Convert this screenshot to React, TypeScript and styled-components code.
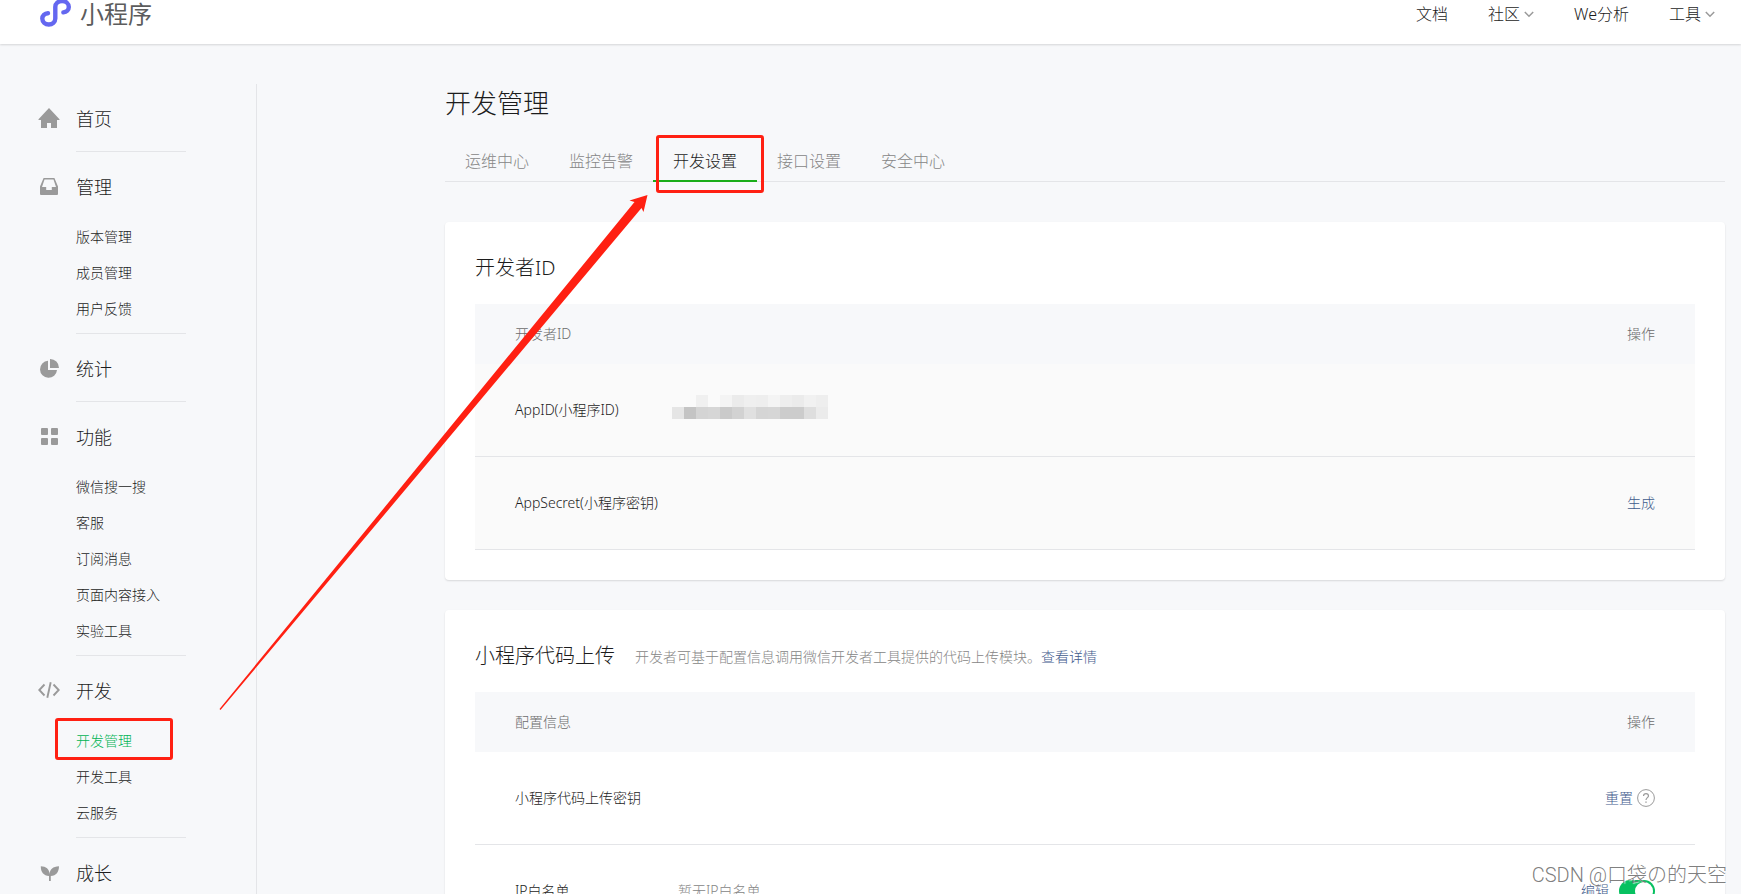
import React from "react";
import styled, { createGlobalStyle, css } from "styled-components";

const color = {
  text: "#1c1c1c",
  muted: "#868686",
  head: "#6c6c6c",
  line: "#e4e5e8",
  page: "#f7f8fa",
  green: "#00b454",
  switchGreen: "#07c160",
  tabGreen: "#1aad19",
  link: "#415a8c",
  mark: "#ff2012",
};

const GlobalStyle = createGlobalStyle`
  *, *::before, *::after { box-sizing: border-box; }
  body {
    margin: 0;
    background: ${color.page};
    color: ${color.text};
    font-family: "Noto Sans", "Noto Sans CJK SC", sans-serif;
    font-weight: 300;
    font-size: 14px;
  }
  a { color: inherit; text-decoration: none; }
  h1, h2, ul { margin: 0; padding: 0; font-weight: inherit; }
  ul { list-style: none; }
  button { font: inherit; border: 0; padding: 0; background: none; cursor: pointer; }
`;

const Shell = styled.div`
  position: relative;
  display: flex;
  flex-direction: column;
  height: 100vh;
  overflow: hidden;
`;

const Header = styled.header`
  display: flex;
  flex: none;
  align-items: center;
  justify-content: space-between;
  height: 44px;
  padding: 0 26px 16px 40px;
  background: #fff;
  box-shadow: 0 1px 2px rgba(0, 0, 0, 0.14);
`;

const Brand = styled.a`
  display: flex;
  align-items: center;
  gap: 8px;
  color: #5c5c5c;
  font-size: 24px;
  line-height: 28px;
  font-weight: 400;
  svg {
    margin-top: -2px;
  }
`;

const TopNav = styled.nav`
  display: flex;
  gap: 40px;
`;

const TopLink = styled.a`
  display: flex;
  align-items: center;
  gap: 4px;
  font-size: 16px;
  line-height: 24px;
`;

const Body = styled.div`
  display: flex;
  flex: none;
  align-items: stretch;
  padding: 40px 16px 0 0;
`;

const Sidebar = styled.nav`
  flex: none;
  width: 257px;
  padding-left: 38px;
  border-right: 1px solid ${color.line};
`;

const Group = styled.section`
  display: grid;
  grid-template-columns: 22px 110px;
  column-gap: 16px;
`;

const GroupIcon = styled.svg`
  width: 22px;
  height: 22px;
  margin-top: 24px;
  fill: #9a9a9a;
`;

const GroupBody = styled.div`
  padding-top: 19px;
  border-bottom: 1px solid ${color.line};
`;

const GroupTitle = styled.a`
  display: block;
  margin-bottom: 16px;
  font-size: 18px;
  line-height: 32px;
`;

const SubList = styled.ul`
  padding-bottom: 6px;
`;

const SubItem = styled.li`
  position: relative;
  line-height: 36px;
  white-space: nowrap;
`;

const SubLink = styled.a<{ $active?: boolean }>`
  color: ${(p) => (p.$active ? color.green : color.text)};
`;

const marker = css`
  position: absolute;
  border: 3px solid ${color.mark};
  border-radius: 3px;
  pointer-events: none;
`;

const MenuMarker = styled.span`
  ${marker}
  top: -5px;
  left: -21px;
  width: 118px;
  height: 42px;
`;

const TabMarker = styled.span`
  ${marker}
  top: -7px;
  left: 3px;
  width: 108px;
  height: 58px;
`;

const Main = styled.main`
  flex: 1;
  min-width: 0;
  margin-left: 188px;
`;

const PageTitle = styled.h1`
  font-size: 26px;
  line-height: 38px;
  margin-bottom: 20px;
`;

const Tabs = styled.div`
  display: flex;
  margin-bottom: 40px;
  box-shadow: inset 0 -1px ${color.line};
`;

const TabSlot = styled.div`
  position: relative;
`;

const Tab = styled.button<{ $active?: boolean }>`
  display: block;
  height: 40px;
  padding: 0 20px;
  border-bottom: 2px solid ${(p) => (p.$active ? color.tabGreen : "transparent")};
  color: ${(p) => (p.$active ? color.text : color.muted)};
  font-size: 16px;
  line-height: 38px;
`;

const Card = styled.section`
  margin-bottom: 30px;
  padding: 30px;
  background: #fff;
  border-radius: 4px;
  box-shadow: 0 1px 2px rgba(0, 0, 0, 0.13);
`;

const CardHead = styled.div`
  display: flex;
  align-items: center;
  gap: 20px;
  margin-bottom: 20px;
  line-height: 32px;
`;

const CardTitle = styled.h2`
  font-size: 20px;
`;

const Hint = styled.p`
  margin: 0;
  padding-top: 2px;
  line-height: 30px;
  color: ${color.muted};
`;

const TextLink = styled.a`
  color: ${color.link};
`;

const DataTable = styled.table<{ $tinted?: boolean }>`
  width: 100%;
  border-spacing: 0;
  line-height: 20px;
  th {
    height: 60px;
    padding: 0;
    background: ${color.page};
    color: ${color.head};
    font-weight: inherit;
    text-align: left;
  }
  td {
    height: 93px;
    padding: 0;
    border-bottom: 1px solid ${color.line};
    background: ${(p) => (p.$tinted ? "#fafafa" : "#fff")};
  }
  th:first-child,
  td:first-child {
    padding-left: 40px;
  }
  th:last-child,
  td:last-child {
    padding-right: 40px;
    text-align: right;
  }
`;

const LabelCol = styled.col<{ $width: number }>`
  width: ${(p) => p.$width}px;
`;

const Muted = styled.span`
  color: ${color.muted};
`;

const Actions = styled.div<{ $gap: number }>`
  display: flex;
  align-items: center;
  justify-content: flex-end;
  gap: ${(p) => p.$gap}px;
`;

const HelpButton = styled.button`
  display: block;
  width: 18px;
  height: 18px;
  svg {
    display: block;
  }
`;

const Switch = styled.input`
  appearance: none;
  display: block;
  width: 36px;
  height: 22px;
  margin: 0;
  padding: 2px;
  border-radius: 11px;
  background: ${color.switchGreen};
  &::before {
    content: "";
    display: block;
    width: 18px;
    height: 18px;
    margin-left: auto;
    border-radius: 50%;
    background: #fff;
  }
`;

const Mosaic = styled.svg`
  display: block;
`;

const ArrowLayer = styled.svg`
  position: absolute;
  inset: 0;
  width: 100%;
  height: 100%;
  pointer-events: none;
  fill: ${color.mark};
`;

const Watermark = styled.div`
  position: absolute;
  right: 14px;
  bottom: 5px;
  color: rgba(110, 110, 110, 0.9);
  font-family: Roboto, "Noto Sans CJK SC", sans-serif;
  font-size: 20px;
  line-height: 28px;
  text-shadow: 1px 1px 1px rgba(255, 255, 255, 0.8);
  pointer-events: none;
`;

const Chevron = () => (
  <svg width="10" height="8" viewBox="0 0 10 8" fill="none" stroke="#9a9a9a" strokeWidth="1.5" aria-hidden="true">
    <path d="M.8 2 5 6.2 9.2 2" />
  </svg>
);

const icons = {
  home: <path d="M11 0 21.5 11.2V12H19v8h-6v-5H9v5H3v-8H.5v-.8z" />,
  inbox: (
    <path
      fillRule="evenodd"
      d="M5.6 2h10.8L20 10.5V18a1 1 0 0 1-1 1H3a1 1 0 0 1-1-1v-7.500zM6.500 3.500 4 11h4.200v3h5.600v-3H18l-2.500-7.500z"
    />
  ),
  pie: <path d="M10 2.800V12h9a8.500 8.500 0 1 1-9-9.200zM12 1a8.800 8.800 0 0 1 9 8.900h-9z" />,
  grid: (
    <>
      <rect x="3" y="2" width="7" height="7" rx="1" />
      <rect x="13" y="2" width="7" height="7" rx="1" />
      <rect x="3" y="12" width="7" height="7" rx="1" />
      <rect x="13" y="12" width="7" height="7" rx="1" />
    </>
  ),
  code: (
    <path d="M6.500 4.500 1.300 10l5.200 5.500M15.500 4.500l5.200 5.500-5.200 5.500M12.700 2.200 9.300 17.800" fill="none" stroke="#9a9a9a" strokeWidth="1.900" />
  ),
  sprout: (
    <path d="M2.800 4.200c5.200.2 8.600 2.800 8.800 7.800.4-4.800 3.200-7.600 9.400-7.800 0 5.600-2.800 9.600-8.200 9.800V19h-1.800v-5C5.800 13.600 2.600 10 2.800 4.200z" />
  ),
};

type Item = { icon: keyof typeof icons; title: string; subs?: string[] };

const menu: Item[] = [
  { icon: "home", title: "首页" },
  { icon: "inbox", title: "管理", subs: ["版本管理", "成员管理", "用户反馈"] },
  { icon: "pie", title: "统计" },
  { icon: "grid", title: "功能", subs: ["微信搜一搜", "客服", "订阅消息", "页面内容接入", "实验工具"] },
  { icon: "code", title: "开发", subs: ["开发管理", "开发工具", "云服务"] },
  { icon: "sprout", title: "成长" },
];

const topLinks = [
  { label: "文档" },
  { label: "社区", more: true },
  { label: "We分析" },
  { label: "工具", more: true },
];

const tabs = ["运维中心", "监控告警", "开发设置", "接口设置", "安全中心"];

// Shades of the blocks that hide the AppID, one array per row
const mosaic = [
  ["", "", "#f0f0f0", "", "#f4f4f4", "#ebebeb", "#efefef", "#eeeeee", "#f4f4f4", "#eeeeee", "#ebebeb", "#f1f1f1", "#eeeeee"],
  ["#e5e5e5", "#c4c4c4", "#d4d4d4", "#d6d6d6", "#cacaca", "#d2d2d2", "#e0e0e0", "#d5d5d5", "#d6d6d6", "#cccccc", "#cccccc", "#dedede", "#ebebeb"],
];

export default function App() {
  return (
    <Shell>
      <GlobalStyle />
      <Header>
        <Brand href="#">
          <svg width="32" height="30" viewBox="0 0 32 30" fill="none" stroke="#6467f0" strokeWidth="4.400" strokeLinecap="round" aria-hidden="true">
            <path d="M8 15.200C4.600 15.400 2.300 17.600 2.300 20.600c0 3.400 2.900 5.900 6.500 5.900s6.500-2.500 6.500-5.900V9c0-3.400 2.900-5.900 6.800-5.900s6.700 2.500 6.700 5.900c0 3-2.300 5-5.400 5.400" />
          </svg>
          小程序
        </Brand>
        <TopNav>
          {topLinks.map((l) => (
            <TopLink href="#" key={l.label}>
              {l.label}
              {l.more && <Chevron />}
            </TopLink>
          ))}
        </TopNav>
      </Header>

      <Body>
        <Sidebar>
          {menu.map((g) => (
            <Group key={g.title}>
              <GroupIcon viewBox="0 0 22 22" aria-hidden="true">
                {icons[g.icon]}
              </GroupIcon>
              <GroupBody>
                <GroupTitle href="#">{g.title}</GroupTitle>
                {g.subs && (
                  <SubList>
                    {g.subs.map((s) => (
                      <SubItem key={s}>
                        <SubLink href="#" $active={s === "开发管理"}>
                          {s}
                        </SubLink>
                        {s === "开发管理" && <MenuMarker />}
                      </SubItem>
                    ))}
                  </SubList>
                )}
              </GroupBody>
            </Group>
          ))}
        </Sidebar>

        <Main>
          <PageTitle>开发管理</PageTitle>
          <Tabs>
            {tabs.map((t) => (
              <TabSlot key={t}>
                <Tab type="button" $active={t === "开发设置"}>
                  {t}
                </Tab>
                {t === "开发设置" && <TabMarker />}
              </TabSlot>
            ))}
          </Tabs>

          <Card>
            <CardHead>
              <CardTitle>开发者ID</CardTitle>
            </CardHead>
            <DataTable $tinted>
              <colgroup>
                <LabelCol $width={197} />
                <col />
                <LabelCol $width={160} />
              </colgroup>
              <thead>
                <tr>
                  <th colSpan={2}>开发者ID</th>
                  <th>操作</th>
                </tr>
              </thead>
              <tbody>
                <tr>
                  <td>AppID(小程序ID)</td>
                  <td>
                    <Mosaic width="156" height="30" aria-hidden="true">
                      {mosaic.map((row, y) =>
                        row.map((fill, x) =>
                          fill ? <rect key={`${x}-${y}`} x={x * 12} y={y * 12} width="12" height="12" fill={fill} /> : null
                        )
                      )}
                    </Mosaic>
                  </td>
                  <td />
                </tr>
                <tr>
                  <td>AppSecret(小程序密钥)</td>
                  <td />
                  <td>
                    <TextLink href="#">生成</TextLink>
                  </td>
                </tr>
              </tbody>
            </DataTable>
          </Card>

          <Card>
            <CardHead>
              <CardTitle>小程序代码上传</CardTitle>
              <Hint>
                开发者可基于配置信息调用微信开发者工具提供的代码上传模块。<TextLink href="#">查看详情</TextLink>
              </Hint>
            </CardHead>
            <DataTable>
              <colgroup>
                <LabelCol $width={203} />
                <col />
                <LabelCol $width={160} />
              </colgroup>
              <thead>
                <tr>
                  <th colSpan={2}>配置信息</th>
                  <th>操作</th>
                </tr>
              </thead>
              <tbody>
                <tr>
                  <td>小程序代码上传密钥</td>
                  <td />
                  <td>
                    <Actions $gap={4}>
                      <TextLink href="#">重置</TextLink>
                      <HelpButton type="button" aria-label="帮助">
                        <svg width="18" height="18" viewBox="0 0 18 18" fill="none" stroke="#9a9a9a" aria-hidden="true">
                          <circle cx="9" cy="9" r="8.400" />
                          <path d="M6.500 7.100c0-1.500 1-2.500 2.500-2.500s2.500 1 2.500 2.300C11.500 8.600 9 8.800 9 11" strokeWidth="1.200" />
                          <path d="M9 12.400v1.400" strokeWidth="1.400" />
                        </svg>
                      </HelpButton>
                    </Actions>
                  </td>
                </tr>
                <tr>
                  <td>
                    <label htmlFor="ip-list">IP白名单</label>
                  </td>
                  <td>
                    <Muted>暂无IP白名单</Muted>
                  </td>
                  <td>
                    <Actions $gap={10}>
                      <TextLink href="#">编辑</TextLink>
                      <Switch type="checkbox" id="ip-list" defaultChecked />
                    </Actions>
                  </td>
                </tr>
              </tbody>
            </DataTable>
          </Card>
        </Main>
      </Body>

      <ArrowLayer aria-hidden="true">
        <path d="M219.500 709 634.500 202 629.500 200.500 647.500 195 643.500 212 641.500 208 220.500 710z" />
      </ArrowLayer>
      <Watermark>CSDN @口袋の的天空</Watermark>
    </Shell>
  );
}
